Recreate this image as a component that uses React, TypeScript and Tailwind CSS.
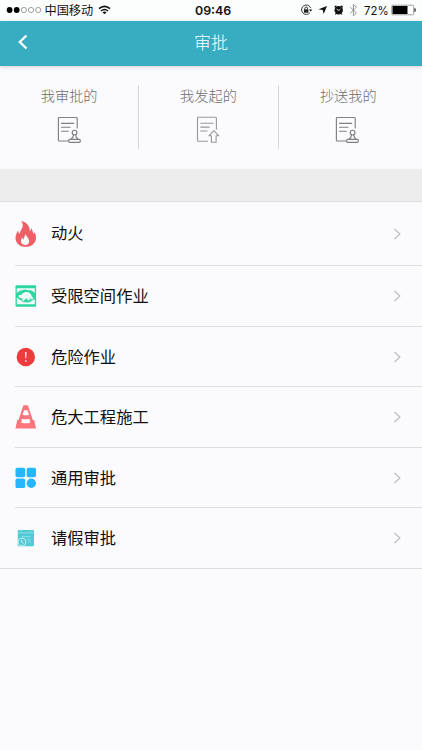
import type { ReactNode } from 'react';

const Stamp = () => (
  <svg width="26" height="28" viewBox="0 0 26 28" fill="none" stroke="#808084" strokeWidth="1.15" strokeLinejoin="round" strokeLinecap="round">
    <path d="M11.500 25H2.200q-.8 0-.8-.8V2.300q0-.8.8-.8h17.200q.8 0 .8.800V12" />
    <path d="M4.500 7.400h12.200M4.500 11.200h8.500M4.500 15.200h6.800" />
    <circle cx="17.600" cy="16.600" r="2.400" />
    <path d="M16.500 18.900q-.2 2.700-2.300 4.100M18.700 18.900q.2 2.700 2.300 4.100" />
    <rect x="11.700" y="23.300" width="11.600" height="3" rx="1" />
  </svg>
);

const Submit = () => (
  <svg width="26" height="28" viewBox="0 0 26 28" fill="none" stroke="#98989c" strokeWidth="1.1" strokeLinejoin="round" strokeLinecap="round">
    <path d="M11.500 25.300H2.300q-.8 0-.8-.8V2.100q0-.8.8-.8h17.300q.8 0 .8.800v11.100" />
    <path d="M4.700 7.300h12.500M4.700 11.100h8.500M4.700 15h6.300" />
    <path d="m17.900 14.600-5.100 5.200h2.600v6.500h4.700v-6.500h2.700z" />
  </svg>
);

const Flame = () => (
  <svg width="22" height="28" viewBox="0 0 22 28">
    <path fill="#ed6066" d="M6.100 1c5.700.9 8.500 5 8.800 10.200.9-.8 1.300-1.900 1.300-3.300 1.400 1.800 1.300 4.100 2.600 6 .5-.6.8-1.200.8-2 .8 1.800 1.400 3.700 1.400 5.800 0 5.400-4.300 9.100-10.300 9.100C4.700 26.800.5 23.200.5 18c0-3 1.200-5.300 2.600-7.600.2 1.400.6 2.500 1.500 3.400C5.200 9.900 10.400 6 6.100 1Z" />
    <path fill="#fbfbfd" d="M10.800 13.800c-.3 2.300 3.400 4.400 3.400 7.500 0 2.400-1.600 3.600-4 3.600-2.500 0-4.200-1.400-4.200-3.600 0-1.500.5-2.700 1.300-3.700.2.900.6 1.500 1.300 1.900.3-2 1.400-3.600 2.200-5.700Z" />
  </svg>
);

const Confined = () => (
  <svg width="22" height="22" viewBox="0 0 22 22">
    <rect x=".5" y=".2" width="20.600" height="21.600" rx="1" fill="#2fd5a0" />
    <path fill="#effcf8" d="M1.800 3.200h18v4.700c-1.300-.6-1.800-1.700-3-2.300-1.800-.9-3.500.1-5.500-.8-2-.8-3.600.8-5.300.8-1.700.1-2.400 1.800-4.200 2.500Z" />
    <path fill="#effcf8" d="M5.500 11.500c.8-2.400 2.900-4.200 5.400-4.400 2.900-.2 4.900 1.300 5.700 3.600.5 1.200 1.500 1.900 1.800 3.300l-2.200.4-1.400-2-.2 2.900-2-.1-.7-2.200-1.700 1.200-1.600 1.800-1.700-.4 1-2.200-2.100-.1Z" />
    <path fill="#effcf8" d="M1.800 12.800c1.500.5 2.200 1.700 3.700 2.500 1.400.8 2.400 2.200 4.500 1.900l3.500.2c2.600-.4 3.600-2.200 6.300-3.100v4.900h-18Z" />
    <circle cx="5" cy="11.500" r="1.400" fill="#effcf8" />
  </svg>
);

const Danger = () => (
  <svg width="22" height="22" viewBox="0 0 22 22">
    <circle cx="10.800" cy="11" r="9.200" fill="#ef3b3d" />
    <path d="M9.900 6h1.800l-.4 6.500h-1z" fill="#ffdada" />
    <circle cx="10.800" cy="15" r=".9" fill="#ffcaca" />
  </svg>
);

const Cone = () => (
  <svg width="22" height="24" viewBox="0 0 22 24">
    <path fill="#fc747c" d="M8.100 1q.3-.8 1-.8h3.100q.7 0 1 .8l4.600 14.100h1.400L21 23.400H.5l1.700-8.300h1.400Z" />
    <path fill="#fbfbfd" d="M9.100 5.200h3.400l1.700 4.500q-3.300 1-6.700 0ZM6.900 13.700q3.800 1 7.600 0l.7 4.100q-4.500 1-9 0Z" />
  </svg>
);

const Apps = () => (
  <svg width="22" height="22" viewBox="0 0 22 22" fill="#25b6fc">
    <rect x=".5" y=".8" width="9.700" height="9.500" rx="1.700" />
    <rect x="11.700" y=".8" width="9.300" height="9.500" rx="1.700" />
    <rect x=".5" y="11.600" width="9.700" height="9.500" rx="1.700" />
    <circle cx="16.300" cy="16.300" r="4.700" />
  </svg>
);

const Leave = () => (
  <svg width="22" height="20" viewBox="0 0 22 20" fill="none">
    <rect x="2.800" y="2" width="16.200" height="16.200" rx="1.300" fill="#50cad5" />
    <path d="M3.500 4.900h14.800M7 8.700h8.500M12 11.800h4M13 14h2.500" stroke="#a3e5ea" strokeWidth=".8" />
    <path d="M6 1.500v1.700M15.500 1.500v1.700" stroke="#a3e5ea" />
    <circle cx="7" cy="14" r="3.900" fill="#50cad5" stroke="#c8f0f3" strokeWidth=".9" />
    <path d="M6.700 11.900v2.400l1.900 1" stroke="#d7f5f6" strokeWidth=".9" />
  </svg>
);

const Chevron = () => (
  <svg width="9" height="12" viewBox="0 0 9 12" fill="none" stroke="#bdbdc1" strokeWidth="1.200"><path d="m1.500 1 5.400 5-5.400 5" /></svg>
);

const StatusBar = () => (
  <div className="flex h-[20.500px] shrink-0 items-center bg-[#fcfdfd] text-[12px] text-[#111]">
    <svg className="ml-[6px]" width="36" height="8" viewBox="0 0 36 8">
      <circle cx="3.600" cy="4" r="2.900" /><circle cx="10.700" cy="4" r="2.900" />
      <g fill="none" stroke="#777" strokeWidth=".7"><circle cx="17.900" cy="4" r="2.600" /><circle cx="25" cy="4" r="2.600" /><circle cx="32.200" cy="4" r="2.600" /></g>
    </svg>
    <span className="ml-[2.500px] w-[50px] whitespace-nowrap text-[12.200px] leading-5">中国移动</span>
    <svg className="ml-[3.500px]" width="13" height="10" viewBox="0 0 13 10" fill="none" stroke="#111" strokeWidth="1.600">
      <path d="M1 3.600q5.500-4.600 11 0M3 6q3.500-3 7 0" /><path d="m6.500 9.300-2-2q2-1.500 4 0z" fill="#111" stroke="none" />
    </svg>
    <span className="ml-[84px] w-[40px] pt-px font-['Inter'] text-[12.400px] font-semibold leading-5">09:46</span>
    <svg className="ml-[65px]" width="60" height="14" viewBox="0 0 60 14" fill="none" stroke="#222">
      <path d="M10 9.600a4.700 4.700 0 1 1 .7-4.500" strokeWidth=".9" /><path d="m8.800 6.500 3.600-.1-1.700 2z" fill="#222" stroke="none" />
      <rect x="4" y="6.300" width="4.400" height="3.400" fill="#222" stroke="none" /><path d="M4.900 6.500V5.200q0-1.100 1.300-1.100t1.300 1.100v1.300" strokeWidth=".9" />
      <path d="m27 3-3.300 8-1-3.900-4.200-.8z" fill="#111" stroke="none" />
      <circle cx="38.700" cy="7.300" r="4.200" fill="#111" stroke="none" /><path d="m34.700 4.300 1.700-1.600M42.700 4.300l-1.700-1.600M36.100 10.500l-.7 1M41.300 10.500l.7 1" stroke="#111" strokeWidth="1.300" /><path d="M36.700 6.100 38.800 7.500l1.500-1.200" stroke="#fff" strokeWidth=".8" />
      <path d="m50.200 4.100 6.200 5.900-3 2.800V1.500l3 2.700-6.200 6" stroke="#808080" strokeWidth=".8" />
    </svg>
    <span className="ml-[4px] w-[25px] pt-px font-['Inter'] text-[11.400px] leading-5">72%</span>
    <svg className="ml-[2px]" width="27" height="12" viewBox="0 0 27 12">
      <rect x=".7" y="1.200" width="22" height="9.600" rx="1.200" fill="#fff" stroke="#777" strokeWidth=".7" /><path d="M1.500 2h15v8h-15z" /><path d="M23.500 4q1.200 0 1.200 2t-1.200 2z" />
    </svg>
  </div>
);

const Tab = ({ label, children, last = false, pad, iconPad }: { label: string; children: ReactNode; last?: boolean; pad: string; iconPad: string }) => (
  <div className={`flex h-[64px] flex-col items-center ${last ? 'flex-1' : 'w-[139.300px] border-r border-[#d8d8da]'} ${pad}`}>
    <span className="text-[14.200px] font-light leading-5 text-[#6c6c70]">{label}</span>
    <span className={`mt-[11px] ${iconPad}`}>{children}</span>
  </div>
);

const rows = [
  { label: '动火', icon: <Flame />, size: 'h-[64px]', shift: 'pb-[4px]' },
  { label: '受限空间作业', icon: <Confined />, size: 'h-[61px]', shift: 'pb-[2px]' },
  { label: '危险作业', icon: <Danger />, size: 'h-[60px]', shift: 'pb-[2px]' },
  { label: '危大工程施工', icon: <Cone />, size: 'h-[61px]', shift: 'pb-[2px]' },
  { label: '通用审批', icon: <Apps />, size: 'h-[60px]', shift: 'pb-[2px]' },
  { label: '请假审批', icon: <Leave />, size: 'h-[60px]', shift: 'pb-[2px]' },
];

export default function App() {
  return (
    <div className="flex h-[750px] w-[422px] flex-col overflow-hidden bg-[#fbfbfd] font-['Noto_Sans_CJK_SC',sans-serif]">
      <StatusBar />
      <header className="relative z-10 flex h-[45px] shrink-0 items-center bg-[#38acc1] pb-[2px] shadow-[0_1px_4px_rgba(0,0,0,0.18)]">
        <svg className="ml-[17px]" width="12" height="16" viewBox="0 0 12 16" fill="none" stroke="#fff" strokeWidth="2.300"><path d="M9.500 1.500 2.800 8l6.700 6.500" /></svg>
        <h1 className="flex-1 pr-[29px] text-center text-[17px] font-light leading-6 text-white">审批</h1>
      </header>
      <nav className="flex h-[103.500px] shrink-0 pt-[19.500px]">
        <Tab label="我审批的" pad="" iconPad="pl-[2px]"><Stamp /></Tab>
        <Tab label="我发起的" pad="" iconPad="pl-[1px]"><Submit /></Tab>
        <Tab label="抄送我的" pad="pr-[4px]" iconPad="" last><Stamp /></Tab>
      </nav>
      <div className="h-[33px] shrink-0 border-b border-[#dddddf] bg-[#ededed]" />
      <main className="border-b border-[#dedee1]">
        {rows.map(({ label, icon, size, shift }, i) => (
          <div key={label} className={`ml-[15px] flex items-center ${size} ${i < rows.length - 1 ? 'border-b border-[#dedee1]' : ''}`}>
            <span className="flex w-[22px] justify-center">{icon}</span>
            <span className={`ml-[14px] flex-1 text-[16.300px] leading-6 text-[#111] ${shift}`}>{label}</span>
            <span className="mr-[20px]"><Chevron /></span>
          </div>
        ))}
      </main>
    </div>
  );
}
